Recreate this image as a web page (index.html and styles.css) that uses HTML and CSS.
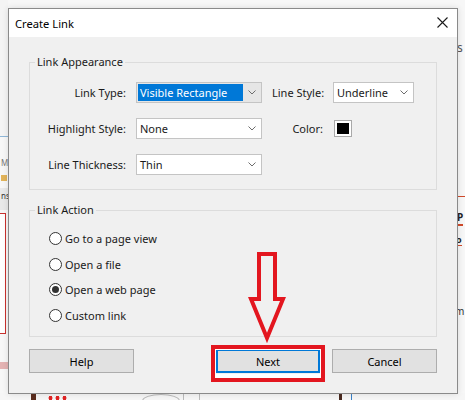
FILE: index.html
```html
<!DOCTYPE html>
<html>
<head>
<meta charset="utf-8">
<title>Create Link</title>
<link rel="stylesheet" href="styles.css">
</head>
<body>
<div class="desk">
  <div class="bg bg-left-top"></div>
  <div class="bg bg-left-line"></div>
  <div class="bg bg-left-text1">Mi</div>
  <div class="bg bg-left-icon"></div>
  <div class="bg bg-left-band"></div>
  <div class="bg bg-left-text2">ns</div>
  <div class="bg bg-left-red"></div>
  <div class="bg bg-left-pink"></div>
  <div class="bg bg-right-s">s</div>
  <div class="bg bg-right-red1"></div>
  <div class="bg bg-right-p">P</div>
  <div class="bg bg-right-o">o</div>
  <div class="bg bg-right-m">m</div>
  <div class="bg bg-bottom">
    <span class="bb bb-brown"></span>
    <span class="bb bb-stars"></span>
    <span class="bb bb-circle1"></span>
    <span class="bb bb-circle2"></span>
    <span class="bb bb-dark"></span>
    <span class="bb bb-blue"></span>
  </div>

  <div class="dialog">
    <div class="titlebar">
      <span class="title">Create Link</span>
      <svg class="close" width="11" height="11" viewBox="0 0 11 11"><path d="M0.5 0.5 L10.5 10.5 M10.5 0.5 L0.5 10.5" stroke="#1a1a1a" stroke-width="1.1" fill="none"/></svg>
    </div>
    <div class="content">
      <fieldset class="group appearance">
        <legend>Link Appearance</legend>
        <div class="grid">
          <span class="lbl">Link Type:</span>
          <div class="select focused"><span class="val">Visible Rectangle</span><span class="arrow"><svg width="8" height="5" viewBox="0 0 8 5"><path d="M0.5 0.5 L4 4 L7.5 0.5" stroke="#6d6d6d" fill="none"/></svg></span></div>
          <span class="lbl">Line Style:</span>
          <div class="select"><span class="val">Underline</span><span class="arrow"><svg width="8" height="5" viewBox="0 0 8 5"><path d="M0.5 0.5 L4 4 L7.5 0.5" stroke="#6d6d6d" fill="none"/></svg></span></div>

          <span class="lbl">Highlight Style:</span>
          <div class="select"><span class="val">None</span><span class="arrow"><svg width="8" height="5" viewBox="0 0 8 5"><path d="M0.5 0.5 L4 4 L7.5 0.5" stroke="#6d6d6d" fill="none"/></svg></span></div>
          <span class="lbl">Color:</span>
          <div class="swatch"><span class="swatch-fill"></span></div>

          <span class="lbl">Line Thickness:</span>
          <div class="select"><span class="val">Thin</span><span class="arrow"><svg width="8" height="5" viewBox="0 0 8 5"><path d="M0.5 0.5 L4 4 L7.5 0.5" stroke="#6d6d6d" fill="none"/></svg></span></div>
        </div>
      </fieldset>

      <fieldset class="group action">
        <legend>Link Action</legend>
        <div class="radios">
          <div class="radio"><span class="dot"></span><span>Go to a page view</span></div>
          <div class="radio"><span class="dot"></span><span>Open a file</span></div>
          <div class="radio"><span class="dot checked"></span><span>Open a web page</span></div>
          <div class="radio"><span class="dot"></span><span>Custom link</span></div>
        </div>
      </fieldset>

      <div class="buttons">
        <div class="btn help">Help</div>
        <div class="btn next">Next</div>
        <div class="btn cancel">Cancel</div>
      </div>
    </div>
  </div>

  <svg class="annot-arrow" width="55" height="105" viewBox="0 0 55 105">
    <path d="M19 9 H35 V54 H43 L27 93 L11 54 H19 Z" fill="none" stroke="#e3161f" stroke-width="4" stroke-linejoin="miter"/>
  </svg>
  <div class="annot-box"></div>
</div>
</body>
</html>
```
FILE: styles.css
```css
* { box-sizing: border-box; }
html, body { margin: 0; padding: 0; }
body {
  width: 465px;
  height: 400px;
  overflow: hidden;
  background: #f7f7f7;
  font-family: "Noto Sans", "Liberation Sans", sans-serif;
  font-size: 11px;
  color: #1a1a1a;
}
.desk {
  position: relative;
  width: 465px;
  height: 400px;
  padding: 8px 0 0 8px;
}

/* background fragments of the page behind the dialog */
.bg { position: absolute; }
.bg-left-top { left: 0; top: 0; width: 8px; height: 137px; background: #f4f4f4; }
.bg-left-line { left: 0; top: 136px; width: 8px; height: 1px; background: #8fb7d8; }
.bg-left-text1 { left: 1px; top: 157px; font-size: 8px; color: #777; }
.bg-left-icon { left: 1px; top: 175px; width: 6px; height: 6px; background: #e2b45a; }
.bg-left-band { left: 0; top: 188px; width: 8px; height: 22px; background: #e9e9e9; }
.bg-left-text2 { left: 1px; top: 190px; font-size: 8px; color: #333; }
.bg-left-red { left: -4px; top: 213px; width: 10px; height: 121px; border: 1px solid #c9322f; background: #fff; }
.bg-left-pink { left: 0; top: 362px; width: 8px; height: 7px; background: #e4b3b3; }
.bg-right-s { left: 457px; top: 39px; font-size: 12px; color: #555; }
.bg-right-red1 { left: 458px; top: 196px; width: 7px; height: 1px; background: #d04a2a; }
.bg-right-p { left: 457px; top: 211px; font-size: 10px; font-weight: bold; color: #222; border-bottom: 2px solid #d04a2a; line-height: 13px; }
.bg-right-o { left: 456px; top: 235px; font-size: 9px; font-weight: bold; color: #222; border-bottom: 1px solid #d04a2a; line-height: 10px; }
.bg-right-m { left: 455px; top: 304px; font-size: 10px; color: #333; }
.bg-bottom { left: 0; top: 393px; width: 465px; height: 7px; background: #f6f6f6; overflow: hidden; }
.bb { position: absolute; display: block; }
.bb-brown { left: 31px; top: 0; width: 5px; height: 7px; background: #5b2d1e; }
.bb-stars {
  left: 47px; top: 3px; width: 22px; height: 4px;
  background: radial-gradient(circle, #e02424 1.8px, transparent 2.2px) 0 0 / 7px 4px repeat-x;
}
.bb-circle1 { left: 142px; top: 1px; width: 38px; height: 14px; border: 1px solid #bbb; border-radius: 50%; }
.bb-circle2 { left: 183px; top: 0; width: 17px; height: 7px; border-left: 1px solid #bbb; border-right: 1px solid #bbb; }
.bb-dark { left: 339px; top: 0; width: 3px; height: 7px; background: #4a2a20; }
.bb-blue { left: 351px; top: 0; width: 1px; height: 7px; background: #3a82c8; }

/* dialog */
.dialog {
  position: relative;
  width: 450px;
  height: 386px;
  border: 1px solid #8a8a8a;
  background: #f0f0f0;
  box-shadow: 0 0 6px rgba(0,0,0,0.12);
  display: flex;
  flex-direction: column;
}
.titlebar {
  height: 28px;
  background: #ffffff;
  display: flex;
  align-items: center;
  justify-content: space-between;
  padding: 0 9px 0 6px;
  flex: none;
}
.title { font-size: 11.2px; color: #000; }
.close { display: block; margin-top: -1px; }

.content {
  padding: 0 20px;
  flex: 1;
}

.group {
  margin: 0;
  padding: 0;
  border: 1px solid #dcdcdc;
  min-width: 0;
}
.group legend {
  margin-left: 5px;
  padding: 0 2px;
  line-height: 16px;
  font-size: 11px;
  color: #1a1a1a;
}
.appearance { margin-top: 17px; }
.action { margin-top: 12px; }

.grid {
  display: grid;
  grid-template-columns: 96px 126px 51px 81px;
  column-gap: 10px;
  row-gap: 15px;
  padding: 12px 0 14px 0;
  align-items: center;
}
.lbl {
  text-align: right;
  white-space: nowrap;
}
.select {
  height: 21px;
  border: 1px solid #c4c4c4;
  background: #fff;
  display: flex;
  align-items: stretch;
}
.select .val {
  flex: 1;
  padding-left: 3px;
  line-height: 19px;
  white-space: nowrap;
  overflow: hidden;
}
.select .arrow {
  width: 18px;
  flex: none;
  display: flex;
  align-items: center;
  justify-content: center;
}
.select .arrow svg { display: block; }
.select.focused { background: #e6e6e6; }
.select.focused .val {
  background: #0078d7;
  color: #fff;
  margin: 1px 0 1px 1px;
  line-height: 17px;
  padding-left: 2px;
}
.swatch {
  width: 18px;
  height: 17px;
  border: 1px solid #a9a9a9;
  background: #fff;
  padding: 2px;
  margin-left: 1px;
}
.swatch-fill { display: block; width: 100%; height: 100%; background: #000; }

.radios {
  padding: 8px 0 8px 19px;
  display: flex;
  flex-direction: column;
}
.radio {
  height: 25.5px;
  display: flex;
  align-items: center;
  gap: 3px;
}
.dot {
  width: 13px;
  height: 13px;
  border: 1px solid #333;
  border-radius: 50%;
  background: #fff;
  flex: none;
  display: flex;
  align-items: center;
  justify-content: center;
}
.dot.checked::after {
  content: "";
  width: 7px;
  height: 7px;
  border-radius: 50%;
  background: #333;
}

.buttons {
  margin-top: 12px;
  display: flex;
  gap: 12px;
}
.btn {
  height: 24px;
  background: #e1e1e1;
  border: 1px solid #adadad;
  display: flex;
  align-items: center;
  justify-content: center;
  font-size: 11px;
  color: #000;
}
.help { width: 105px; margin-right: auto; }
.next { width: 104px; border: 2px solid #0078d7; }
.cancel { width: 105px; }

/* annotation overlays */
.annot-arrow { position: absolute; left: 240px; top: 245px; display: block; }
.annot-box {
  position: absolute;
  left: 211px;
  top: 345px;
  width: 114px;
  height: 37px;
  border: 4px solid #e3161f;
  box-shadow: inset 0 0 0 1px #fff, inset 0 -4px 0 0 #fff;
}
```
